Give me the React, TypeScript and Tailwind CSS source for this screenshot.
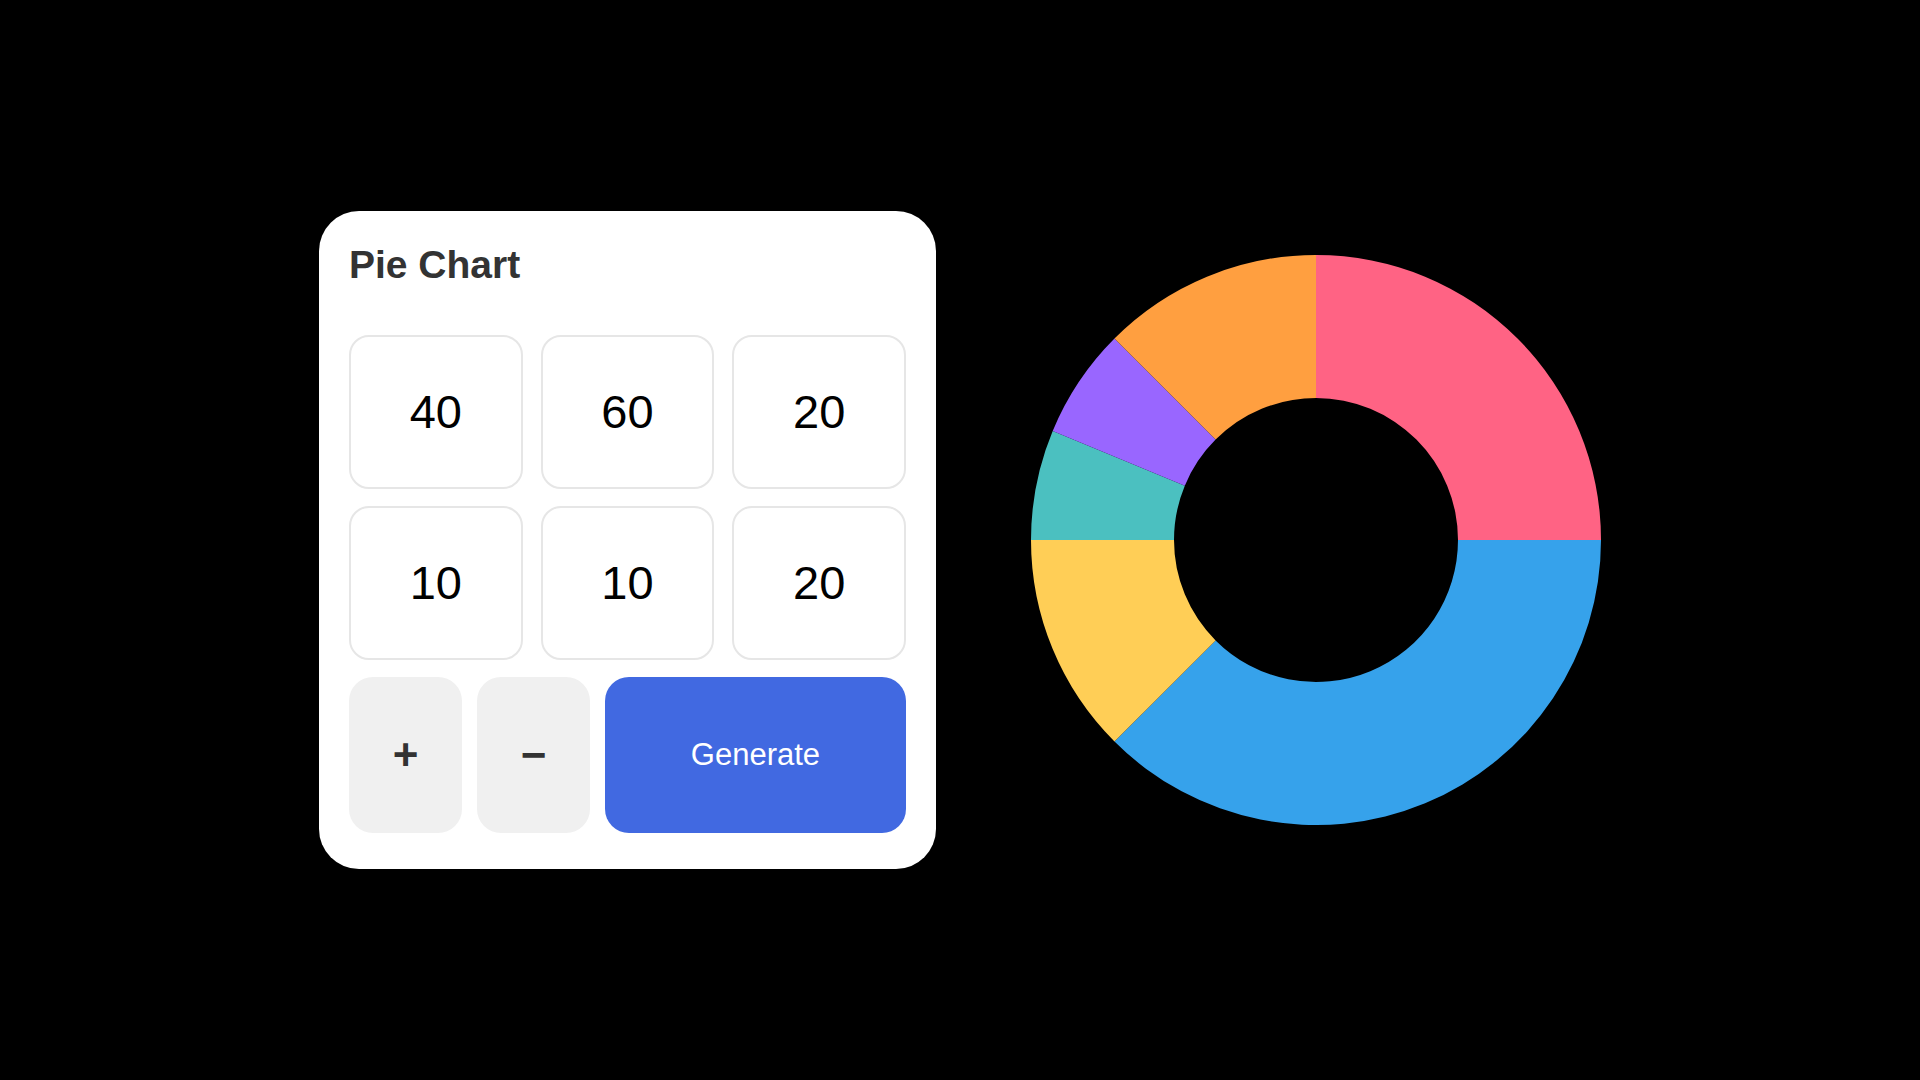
import React from "react";

const values = [40, 60, 20, 10, 10, 20];
const colors = ["#FF6384", "#36A2EB", "#FFCE56", "#4BC0C0", "#9966FF", "#FF9F40"];

function arcPath(cx: number, cy: number, R: number, r: number, a0: number, a1: number) {
  const p = (rad: number, a: number) => {
    const t = (a - 90) * (Math.PI / 180);
    return [cx + rad * Math.cos(t), cy + rad * Math.sin(t)];
  };
  const large = a1 - a0 > 180 ? 1 : 0;
  const [x0, y0] = p(R, a0);
  const [x1, y1] = p(R, a1);
  const [x2, y2] = p(r, a1);
  const [x3, y3] = p(r, a0);
  return `M ${x0} ${y0} A ${R} ${R} 0 ${large} 1 ${x1} ${y1} L ${x2} ${y2} A ${r} ${r} 0 ${large} 0 ${x3} ${y3} Z`;
}

function Donut() {
  const total = values.reduce((a, b) => a + b, 0);
  let acc = 0;
  const segs = values.map((v, i) => {
    const a0 = (acc / total) * 360;
    acc += v;
    const a1 = (acc / total) * 360;
    return <path key={i} d={arcPath(285, 285, 285, 142, a0, a1)} fill={colors[i]} />;
  });
  return (
    <svg width="570" height="570" viewBox="0 0 570 570" className="shrink-0">
      {segs}
    </svg>
  );
}

export default function App() {
  return (
    <div
      className="w-full h-screen bg-black flex items-center justify-center gap-[95px]"
      style={{ fontFamily: '"Liberation Sans", Arial, sans-serif' }}
    >
      <div className="w-[617px] bg-white rounded-[40px] px-[30px] pt-[32px] pb-[36px] flex flex-col shrink-0">
        <div className="h-[44px] leading-[44px] text-[39px] font-bold text-[#333333]">Pie Chart</div>
        <div className="mt-[48px] grid grid-cols-3 gap-x-[18px] gap-y-[17px]">
          {values.map((v, i) => (
            <div
              key={i}
              className="h-[154px] rounded-[20px] border-2 border-[#e6e6e6] flex items-center justify-center text-[47px] text-black"
            >
              {v}
            </div>
          ))}
        </div>
        <div className="mt-[17px] flex gap-[15px] h-[156px]">
          <button className="w-[113px] h-full rounded-[24px] bg-[#f0f0f0] flex items-center justify-center text-[44px] font-bold text-[#333333]">
            +
          </button>
          <button className="w-[113px] h-full rounded-[24px] bg-[#f0f0f0] flex items-center justify-center text-[44px] font-bold text-[#333333]">
            −
          </button>
          <button className="flex-1 h-full rounded-[24px] bg-[#4169e1] flex items-center justify-center text-[31px] text-white">
            Generate
          </button>
        </div>
      </div>
      <Donut />
    </div>
  );
}
